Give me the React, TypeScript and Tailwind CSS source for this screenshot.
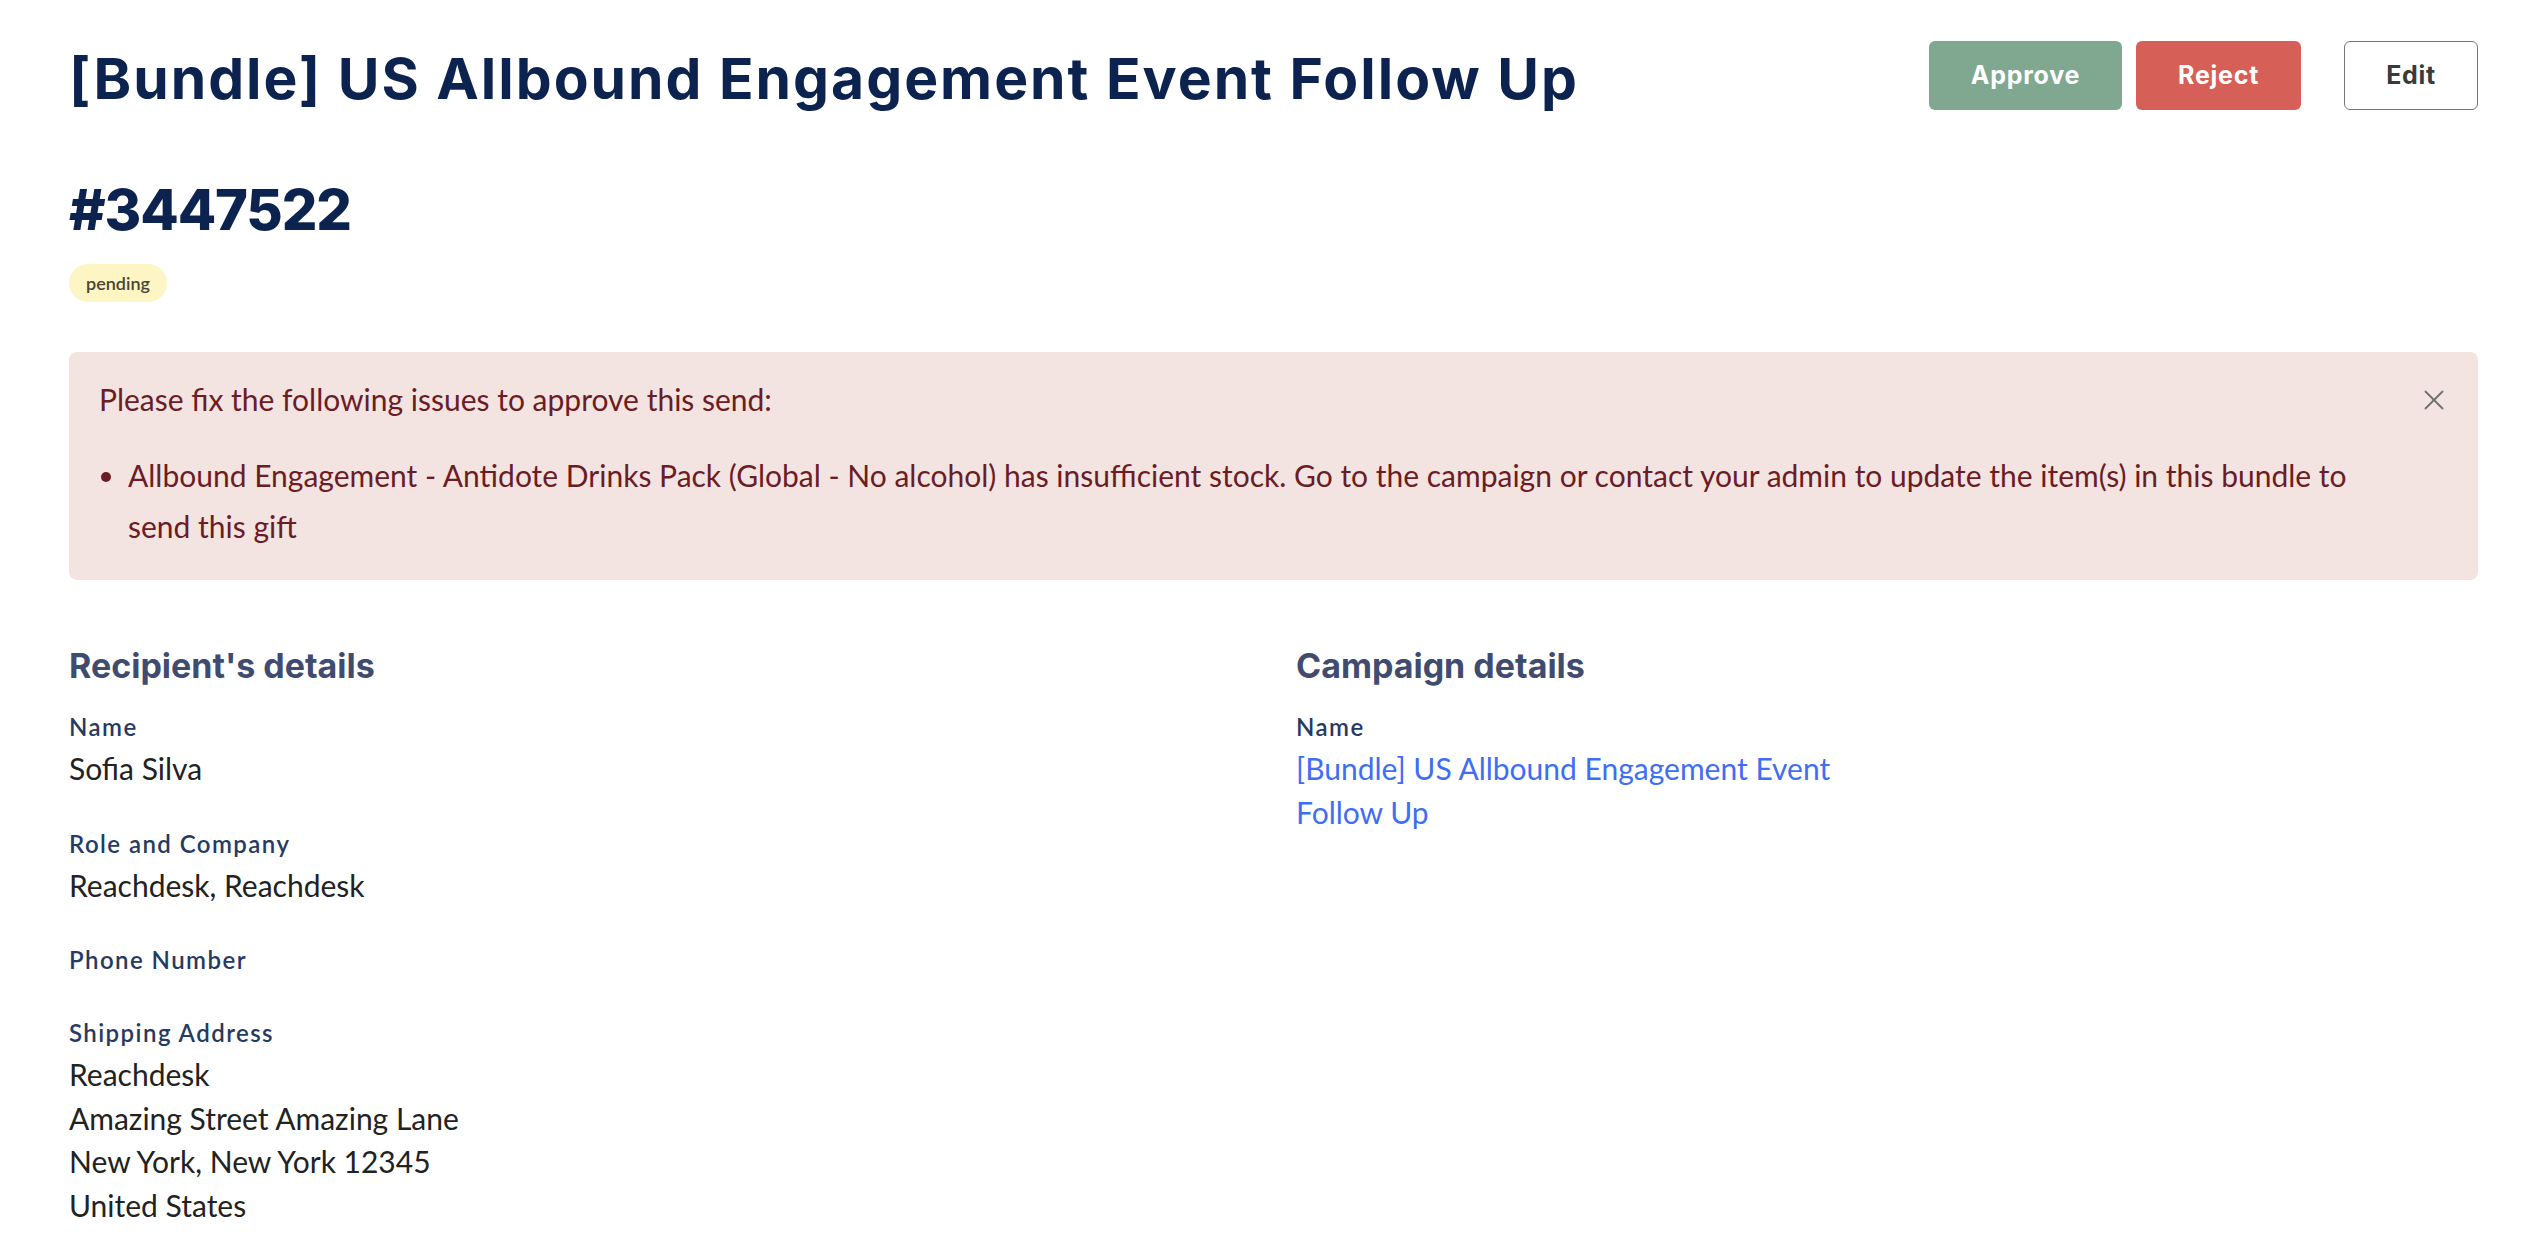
import React from 'react';
import { X } from 'lucide-react';

interface Field {
  label: string;
  lines: string[];
  link?: boolean;
}

const recipient: Field[] = [
  { label: 'Name', lines: ['Sofia Silva'] },
  { label: 'Role and Company', lines: ['Reachdesk, Reachdesk'] },
  { label: 'Phone Number', lines: [] },
  {
    label: 'Shipping Address',
    lines: ['Reachdesk', 'Amazing Street Amazing Lane', 'New York, New York 12345', 'United States'],
  },
];

const campaign: Field[] = [
  { label: 'Name', lines: ['[Bundle] US Allbound Engagement Event Follow Up'], link: true },
];

const heading = "font-['Inter','Open_Sans',sans-serif]";
const body = "font-['Lato','Noto_Sans',sans-serif]";

const DetailsBlock: React.FC<{ title: string; fields: Field[] }> = ({ title, fields }) => (
  <div>
    <h3 className={`${heading} mb-[21px] text-[34px] font-bold leading-[40px] text-[#3f4c70]`}>{title}</h3>
    <div className="flex flex-col gap-[33px]">
      {fields.map((field) => (
        <div key={field.label}>
          <div className={`${body} text-[24px] font-semibold leading-[40px] tracking-[0.06em] text-[#273a62]`}>
            {field.label}
          </div>
          {field.lines.map((line) =>
            field.link ? (
              <a key={line} href="#" className={`${body} block max-w-[580px] text-[30px] leading-[43.5px] text-[#3e6ef2]`}>
                {line}
              </a>
            ) : (
              <div key={line} className={`${body} text-[30px] leading-[43.5px] text-[#222222]`}>
                {line}
              </div>
            ),
          )}
        </div>
      ))}
    </div>
  </div>
);

const App: React.FC = () => {
  return (
    <div className="min-h-screen bg-white pb-10 pl-[69px] pr-[46px] pt-[41px]">
      {/* Header */}
      <div className="flex items-start justify-between">
        <h1 className={`${heading} mt-[5px] text-[57px] font-bold leading-[66px] tracking-[0.035em] text-[#0c2350]`}>
          [Bundle] US Allbound Engagement Event Follow Up
        </h1>
        <div className="flex items-center">
          <button className={`${heading} h-[69px] rounded-[6px] bg-[#80a890] px-[42px] text-[25px] font-bold tracking-[0.03em] text-white`}>
            Approve
          </button>
          <button className={`${heading} ml-[14px] h-[69px] rounded-[6px] bg-[#d65f57] px-[42px] text-[25px] font-bold tracking-[0.03em] text-white`}>
            Reject
          </button>
          <button className={`${heading} ml-[43px] h-[69px] rounded-[6px] border-[1.5px] border-[#767676] bg-white px-[41px] text-[25px] font-bold tracking-[0.03em] text-[#3a3a3a]`}>
            Edit
          </button>
        </div>
      </div>

      <h2 className={`${heading} mt-[63px] text-[56px] font-extrabold leading-[70px] tracking-[-0.02em] text-[#0c2350]`}>
        #3447522
      </h2>

      <span className={`${body} mt-[19px] inline-flex h-[38px] items-center rounded-full bg-[#fdf5c4] px-[17px] text-[18px] font-semibold text-[#4a4530]`}>
        pending
      </span>

      {/* Alert */}
      <div className={`${body} mt-[50px] flex items-start rounded-[8px] bg-[#f3e4e2] pb-[28px] pl-[30px] pr-[27px] pt-[22px] text-[30px] leading-[51px] text-[#6b1c24]`}>
        <div className="flex-1">
          <p>Please fix the following issues to approve this send:</p>
          <ul className="mt-[25px] list-disc pl-[29px]">
            <li>
              Allbound Engagement - Antidote Drinks Pack (Global - No alcohol) has insufficient stock. Go to the campaign or
              contact your admin to update the item(s) in this bundle to send this gift
            </li>
          </ul>
        </div>
        <button className="ml-[38px] flex h-[51px] items-center text-[#707070]">
          <X size={34} strokeWidth={1.3} />
        </button>
      </div>

      {/* Details */}
      <div className="mt-[66px] grid grid-cols-2 gap-[45px]">
        <DetailsBlock title="Recipient's details" fields={recipient} />
        <DetailsBlock title="Campaign details" fields={campaign} />
      </div>
    </div>
  );
};

export default App;
